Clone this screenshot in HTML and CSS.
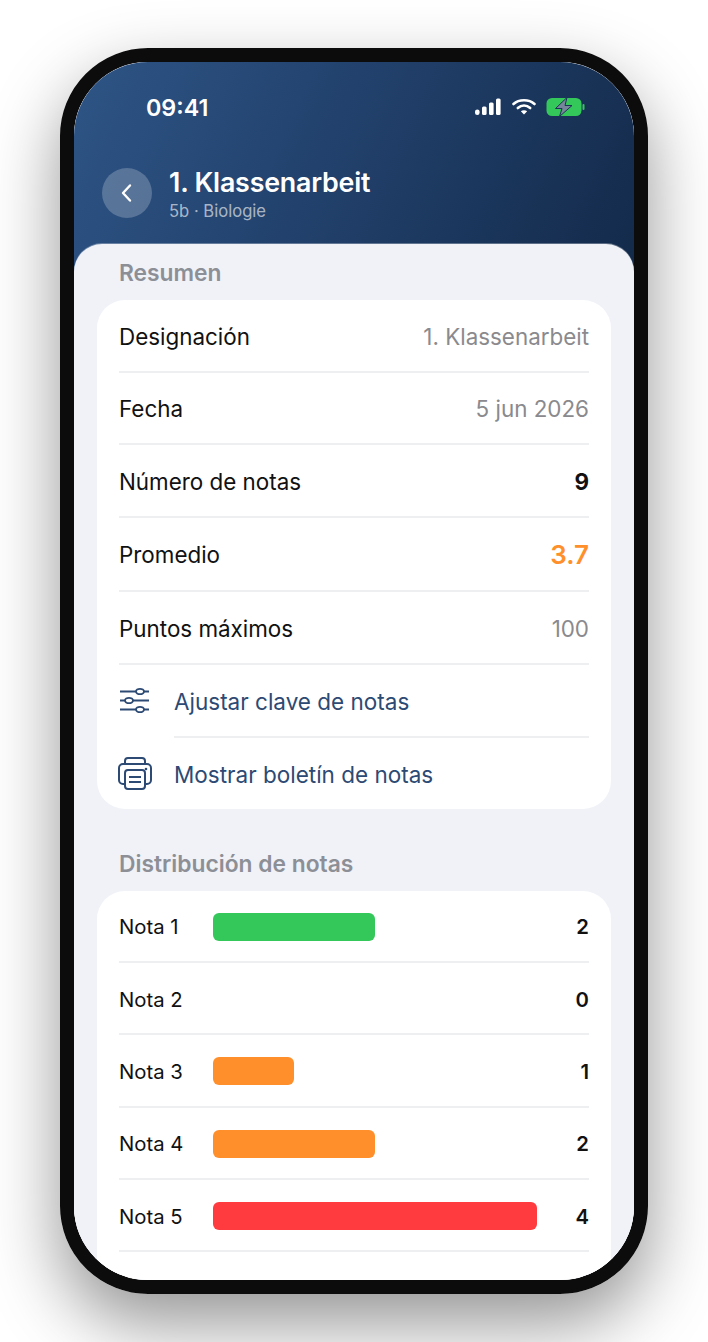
FILE: index.html
```html
<!DOCTYPE html>
<html lang="es">
<head>
    <meta charset="UTF-8">
    <meta name="viewport" content="width=device-width, initial-scale=1.0">
    <title>1. Klassenarbeit</title>
    <link rel="stylesheet" href="styles.css">
</head>
<body>

    <div class="phone">
        <div class="screen">
            <div class="header">
                <div class="status-bar">
                    <span class="time">09:41</span>
                    <div class="status-icons">
                        <svg width="28" height="18" viewBox="0 0 28 18" fill="#fff">
                            <rect x="1" y="11.5" width="4.6" height="5.5" rx="2.3"/>
                            <rect x="8" y="8.5" width="4.6" height="8.5" rx="1.5"/>
                            <rect x="15" y="4.5" width="4.6" height="12.5" rx="1.5"/>
                            <rect x="22" y="0.5" width="4.6" height="16.5" rx="1.5"/>
                        </svg>
                        <svg width="24" height="18" viewBox="0 0 24 18" fill="none" stroke="#fff" stroke-width="2.6" stroke-linecap="round">
                            <path d="M1.5 6C7 1 17 1 22.5 6"/>
                            <path d="M5.8 10C9.5 6.8 14.5 6.8 18.2 10"/>
                            <path d="M12 16.6L8.8 13.2C10.6 11.8 13.4 11.8 15.2 13.2Z" fill="#fff" stroke="none"/>
                        </svg>
                        <svg width="39" height="20" viewBox="0 0 39 20">
                            <rect x="0.5" y="1" width="35" height="18" rx="5.5" fill="#34c759"/>
                            <rect x="36.5" y="7" width="2" height="6" rx="1" fill="#34c759"/>
                            <path d="M21 0.5L9.5 11.5H16L13.5 19.5L26 8.5H19Z" fill="#77859a" stroke="#1b3455" stroke-width="1"/>
                        </svg>
                    </div>
                </div>
                <div class="title-row">
                    <div class="back-btn">
                        <svg width="14" height="20" viewBox="0 0 14 20" fill="none" stroke="#fff" stroke-width="2.4" stroke-linecap="round" stroke-linejoin="round">
                            <path d="M10 2.5L3 10L10 17.5"/>
                        </svg>
                    </div>
                    <div>
                        <h1>1. Klassenarbeit</h1>
                        <div class="subtitle">5b · Biologie</div>
                    </div>
                </div>
            </div>

            <div class="sheet">
                <h2 class="section-title first">Resumen</h2>
                <div class="card">
                    <div class="row"><span>Designación</span><span class="muted">1. Klassenarbeit</span></div>
                    <div class="row"><span>Fecha</span><span class="muted">5 jun 2026</span></div>
                    <div class="row"><span>Número de notas</span><span class="bold">9</span></div>
                    <div class="row tall"><span>Promedio</span><span class="average">3.7</span></div>
                    <div class="row"><span>Puntos máximos</span><span class="muted">100</span></div>
                    <div class="action">
                        <svg class="action-icon" width="34" height="28" viewBox="0 0 34 28" fill="none" stroke="#2c4a73" stroke-width="1.8">
                            <path d="M2 4.5H18M26 4.5H31"/>
                            <ellipse cx="22" cy="4.5" rx="4" ry="2.7"/>
                            <path d="M2 13.5H7M15 13.5H31"/>
                            <ellipse cx="11" cy="13.5" rx="4" ry="2.7"/>
                            <path d="M2 22.5H18M26 22.5H31"/>
                            <ellipse cx="22" cy="22.5" rx="4" ry="2.7"/>
                        </svg>
                        <div class="action-label">Ajustar clave de notas</div>
                    </div>
                    <div class="action">
                        <svg class="action-icon" width="34" height="34" viewBox="0 0 34 34" fill="none" stroke="#2c4a73" stroke-width="2" stroke-linejoin="round">
                            <path d="M7 8V5a3 3 0 0 1 3-3h14a3 3 0 0 1 3 3v3"/>
                            <path d="M7 28H5a4 4 0 0 1-4-4V12a4 4 0 0 1 4-4h24a4 4 0 0 1 4 4v12a4 4 0 0 1-4 4h-2"/>
                            <rect x="7" y="14" width="20" height="19" rx="3"/>
                            <path d="M11 21H23M11 26H23"/>
                            <circle cx="28" cy="13" r="1.3" fill="#2c4a73" stroke="none"/>
                        </svg>
                        <div class="action-label last">Mostrar boletín de notas</div>
                    </div>
                </div>

                <h2 class="section-title">Distribución de notas</h2>
                <div class="card grades">
                    <div class="grade-row"><span class="grade-name">Nota 1</span><div class="bar-track"><div class="bar green half"></div></div><span class="grade-count">2</span></div>
                    <div class="grade-row"><span class="grade-name">Nota 2</span><div class="bar-track"></div><span class="grade-count">0</span></div>
                    <div class="grade-row"><span class="grade-name">Nota 3</span><div class="bar-track"><div class="bar orange quarter"></div></div><span class="grade-count">1</span></div>
                    <div class="grade-row"><span class="grade-name">Nota 4</span><div class="bar-track"><div class="bar orange half"></div></div><span class="grade-count">2</span></div>
                    <div class="grade-row"><span class="grade-name">Nota 5</span><div class="bar-track"><div class="bar red"></div></div><span class="grade-count">4</span></div>
                </div>
            </div>
        </div>
    </div>

</body>
</html>
```

FILE: styles.css
```css
html, body {
    height: 1342px;
    overflow: hidden;
}

body {
    margin: 0;
    background: #fff;
    font-family: Inter, 'Liberation Sans', sans-serif;
    color: #111;
}

.phone {
    width: 588px;
    height: 1246px;
    box-sizing: border-box;
    margin: 48px 0 0 60px;
    border: 14px solid #0c0c0c;
    border-radius: 88px;
    box-shadow: 0 30px 70px rgba(0, 0, 0, 0.42);
}

.screen {
    height: 100%;
    border-radius: 74px;
    overflow: hidden;
    background: #f0f2f8;
}

/* Cabecera */
.header {
    height: 222px;
    box-sizing: border-box;
    background: linear-gradient(115deg, #2e5586 0%, #23436f 40%, #132a4a 100%);
    color: #fff;
}

.status-bar {
    display: flex;
    justify-content: space-between;
    align-items: center;
    height: 30px;
    padding: 30px 49px 0 72px;
}

.time {
    font-size: 23.3px;
    font-weight: 600;
}

.status-icons {
    display: flex;
    align-items: center;
    gap: 10px;
}

.title-row {
    display: flex;
    align-items: center;
    gap: 17px;
    height: 50px;
    margin: 46px 0 0 28px;
}

.back-btn {
    display: flex;
    align-items: center;
    justify-content: center;
    width: 50px;
    height: 50px;
    border-radius: 50%;
    background: rgba(255, 255, 255, 0.22);
}

h1 {
    margin: 0;
    font-size: 26.8px;
    line-height: 32px;
    font-weight: 600;
    letter-spacing: -0.2px;
}

.subtitle {
    margin-top: 3px;
    font-size: 16.6px;
    line-height: 20px;
    color: rgba(255, 255, 255, 0.62);
}

/* Hoja de contenido */
.sheet {
    height: 1036px;
    box-sizing: border-box;
    margin-top: -40px;
    padding: 0 23px;
    border-radius: 28px 28px 0 0;
    background: #f0f2f8;
    box-shadow: 0 -1px 0 rgba(255, 255, 255, 0.3);
    position: relative;
}

.section-title {
    margin: 0;
    padding: 41px 22px 14px;
    font-size: 22.8px;
    line-height: 27px;
    font-weight: 600;
    color: #8d8f96;
}

.section-title.first {
    padding-top: 15px;
}

.card {
    background: #fff;
    border-radius: 28px;
    padding: 0 22px;
    font-size: 22.4px;
}

.card.grades {
    padding-bottom: 80px;
}

.row {
    display: flex;
    justify-content: space-between;
    align-items: center;
    height: 72.5px;
    box-sizing: border-box;
    padding-top: 2px;
    border-bottom: 2px solid #eeeff1;
}

.row.tall {
    height: 74.5px;
}

.muted {
    color: #8a8a8e;
}

.bold {
    font-weight: 700;
}

.average {
    font-size: 26px;
    font-weight: 600;
    color: #ff8f2b;
}

.action {
    display: flex;
    align-items: center;
    color: #2c4a73;
    font-size: 22.5px;
}

.action-icon {
    flex: none;
    margin-left: -1px;
    width: 34px;
}

.action-label {
    flex: 1;
    display: flex;
    align-items: center;
    height: 73px;
    box-sizing: border-box;
    padding-top: 2px;
    margin-left: 22px;
    border-bottom: 2px solid #eeeff1;
}

.action-label.last {
    height: 71px;
    padding-top: 3px;
    border-bottom: none;
}

.grade-row {
    display: flex;
    align-items: center;
    height: 72.4px;
    box-sizing: border-box;
    padding-top: 2px;
    border-bottom: 2px solid #eeeff1;
    font-size: 20.3px;
}

.grade-name {
    flex: none;
    width: 94px;
}

.bar-track {
    flex: none;
    width: 324px;
}

.bar {
    width: 100%;
    height: 28px;
    border-radius: 6px;
}

.bar.half {
    width: 50%;
}

.bar.quarter {
    width: 25%;
}

.green {
    background: #34c759;
}

.orange {
    background: #ff8f2b;
}

.red {
    background: #ff3b40;
}

.grade-count {
    flex: 1;
    text-align: right;
    font-weight: 600;
}
```
